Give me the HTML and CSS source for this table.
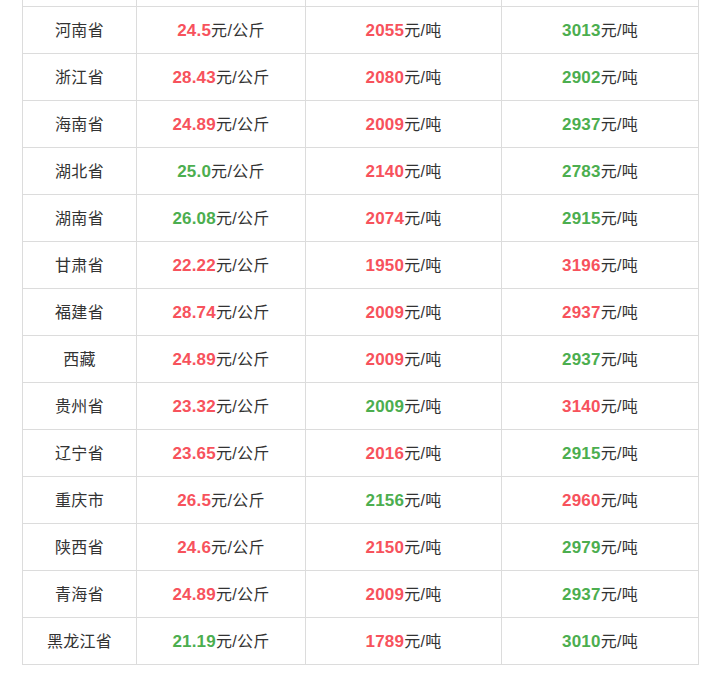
FILE: index.html
```html
<!DOCTYPE html>
<html lang="zh-CN">
<head>
<meta charset="utf-8">
<title>价格表</title>
<link rel="stylesheet" href="styles.css">
</head>
<body>
<div class="wrap">
<table class="price">
<colgroup><col class="c1"><col class="c2"><col class="c3"><col class="c4"></colgroup>
<tbody>
<tr><td>安徽省</td><td><b class="r">24.5</b>元/公斤</td><td><b class="r">2055</b>元/吨</td><td><b class="g">3013</b>元/吨</td></tr>
<tr><td>河南省</td><td><b class="r">24.5</b>元/公斤</td><td><b class="r">2055</b>元/吨</td><td><b class="g">3013</b>元/吨</td></tr>
<tr><td>浙江省</td><td><b class="r">28.43</b>元/公斤</td><td><b class="r">2080</b>元/吨</td><td><b class="g">2902</b>元/吨</td></tr>
<tr><td>海南省</td><td><b class="r">24.89</b>元/公斤</td><td><b class="r">2009</b>元/吨</td><td><b class="g">2937</b>元/吨</td></tr>
<tr><td>湖北省</td><td><b class="g">25.0</b>元/公斤</td><td><b class="r">2140</b>元/吨</td><td><b class="g">2783</b>元/吨</td></tr>
<tr><td>湖南省</td><td><b class="g">26.08</b>元/公斤</td><td><b class="r">2074</b>元/吨</td><td><b class="g">2915</b>元/吨</td></tr>
<tr><td>甘肃省</td><td><b class="r">22.22</b>元/公斤</td><td><b class="r">1950</b>元/吨</td><td><b class="r">3196</b>元/吨</td></tr>
<tr><td>福建省</td><td><b class="r">28.74</b>元/公斤</td><td><b class="r">2009</b>元/吨</td><td><b class="r">2937</b>元/吨</td></tr>
<tr><td>西藏</td><td><b class="r">24.89</b>元/公斤</td><td><b class="r">2009</b>元/吨</td><td><b class="g">2937</b>元/吨</td></tr>
<tr><td>贵州省</td><td><b class="r">23.32</b>元/公斤</td><td><b class="g">2009</b>元/吨</td><td><b class="r">3140</b>元/吨</td></tr>
<tr><td>辽宁省</td><td><b class="r">23.65</b>元/公斤</td><td><b class="r">2016</b>元/吨</td><td><b class="g">2915</b>元/吨</td></tr>
<tr><td>重庆市</td><td><b class="r">26.5</b>元/公斤</td><td><b class="g">2156</b>元/吨</td><td><b class="r">2960</b>元/吨</td></tr>
<tr><td>陕西省</td><td><b class="r">24.6</b>元/公斤</td><td><b class="r">2150</b>元/吨</td><td><b class="g">2979</b>元/吨</td></tr>
<tr><td>青海省</td><td><b class="r">24.89</b>元/公斤</td><td><b class="r">2009</b>元/吨</td><td><b class="g">2937</b>元/吨</td></tr>
<tr><td>黑龙江省</td><td><b class="g">21.19</b>元/公斤</td><td><b class="r">1789</b>元/吨</td><td><b class="g">3010</b>元/吨</td></tr>
</tbody>
</table>
</div>
</body>
</html>
```
FILE: styles.css
```css
html, body {
  margin: 0;
  padding: 0;
  background: #fff;
}
body {
  overflow: hidden;
}
.wrap {
  padding-left: 22px;
  margin-top: -41px;
}
.price {
  border-collapse: collapse;
  table-layout: fixed;
  width: 677px;
  font-family: "Liberation Sans", "Noto Sans CJK SC", sans-serif;
  font-size: 16px;
  color: #333;
}
.c1 { width: 114px; }
.c2 { width: 169px; }
.c3 { width: 196px; }
.c4 { width: 197px; }
.price td {
  border: 1px solid #dcdcdc;
  height: 47px;
  padding: 2px 0 0;
  box-sizing: border-box;
  text-align: center;
  vertical-align: middle;
  line-height: 20px;
  letter-spacing: 0.3px;
}
.price b {
  font-weight: bold;
  font-size: 17px;
  letter-spacing: 0.2px;
}
.r { color: #f7525c; }
.g { color: #4cae4f; }
```
